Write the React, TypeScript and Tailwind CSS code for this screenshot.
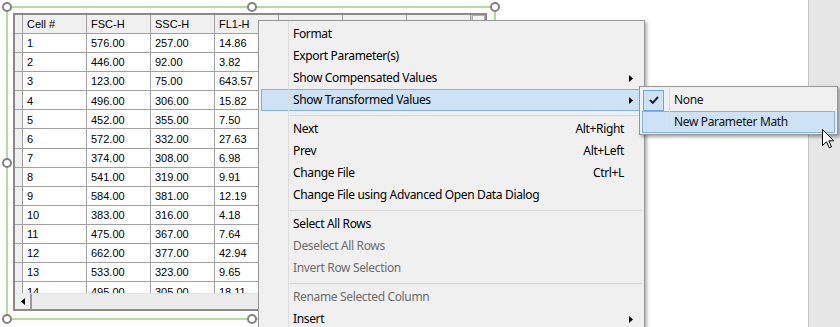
import React from 'react';

type Item =
  | { sep: true }
  | { label: string; shortcut?: string; sub?: boolean; disabled?: boolean; active?: boolean };

const rows: string[][] = [
  ['1', '576.00', '257.00', '14.86'],
  ['2', '446.00', '92.00', '3.82'],
  ['3', '123.00', '75.00', '643.57'],
  ['4', '496.00', '306.00', '15.82'],
  ['5', '452.00', '355.00', '7.50'],
  ['6', '572.00', '332.00', '27.63'],
  ['7', '374.00', '308.00', '6.98'],
  ['8', '541.00', '319.00', '9.91'],
  ['9', '584.00', '381.00', '12.19'],
  ['10', '383.00', '316.00', '4.18'],
  ['11', '475.00', '367.00', '7.64'],
  ['12', '662.00', '377.00', '42.94'],
  ['13', '533.00', '323.00', '9.65'],
  ['14', '495.00', '305.00', '18.11'],
];

const headers = ['Cell #', 'FSC-H', 'SSC-H', 'FL1-H', 'FL2-H', 'FL3-H', 'FL4-H'];

const menu: Item[] = [
  { label: 'Format' },
  { label: 'Export Parameter(s)' },
  { label: 'Show Compensated Values', sub: true },
  { label: 'Show Transformed Values', sub: true, active: true },
  { sep: true },
  { label: 'Next', shortcut: 'Alt+Right' },
  { label: 'Prev', shortcut: 'Alt+Left' },
  { label: 'Change File', shortcut: 'Ctrl+L' },
  { label: 'Change File using Advanced Open Data Dialog' },
  { sep: true },
  { label: 'Select All Rows' },
  { label: 'Deselect All Rows', disabled: true },
  { label: 'Invert Row Selection', disabled: true },
  { sep: true },
  { label: 'Rename Selected Column', disabled: true },
  { label: 'Insert', sub: true },
];

const tableFont = { fontFamily: '"Liberation Sans", Arial, sans-serif' };
const menuFont = { fontFamily: '"Noto Sans", "Open Sans", sans-serif' };

function Handle({ x, y }: { x: number; y: number }) {
  return (
    <div
      className="absolute w-[10px] h-[10px] rounded-full border-2 border-[#828282] bg-white"
      style={{ left: x - 5, top: y - 5 }}
    />
  );
}

function Arrow() {
  return (
    <svg width="4" height="7" viewBox="0 0 4 7" className="block">
      <polygon points="0,0 4,3.5 0,7" fill="#000" />
    </svg>
  );
}

function DataTable() {
  return (
    <div className="w-[474px] h-[298px] border-2 border-[#8a8a8a] flex bg-white text-[11px] text-black" style={tableFont}>
      <div className="w-[456px] flex flex-col">
        <div className="flex-1 overflow-hidden">
          <div className="flex h-[19px] border-b border-[#a0a0a0] bg-[#f0f0f0]">
            <div className="w-[8px] shrink-0 border-r border-[#a0a0a0]" />
            {headers.map((h) => (
              <div key={h} className="w-[64px] shrink-0 border-r border-[#a0a0a0] pl-[4px] pt-[1px] flex items-center">
                {h}
              </div>
            ))}
          </div>
          {rows.map((r) => (
            <div key={r[0]} className="flex h-[19.1px] border-b border-[#a0a0a0]">
              <div className="w-[8px] shrink-0 border-r border-[#a0a0a0] bg-[#f0f0f0]" />
              {[...r, '', '', ''].map((c, i) => (
                <div key={i} className="w-[64px] shrink-0 border-r border-[#a0a0a0] pl-[4px] pt-[1px] flex items-center">
                  {c}
                </div>
              ))}
            </div>
          ))}
        </div>
        <div className="h-[16px] flex bg-[#ececec] border-t border-[#e2e2e2]">
          <div className="w-[17px] flex items-center justify-center border-r-2 border-[#9a9a9a] bg-[#f0f0f0]">
            <svg width="4" height="7" viewBox="0 0 4 7">
              <polygon points="4,0 0,3.5 4,7" fill="#000" />
            </svg>
          </div>
          <div className="flex-1" />
        </div>
      </div>
      <div className="flex-1 bg-[#ececec] border-l border-[#cfcfcf] flex flex-col">
        <div className="h-[17px] border border-[#b0b0b0] bg-[#f4f4f4]" />
      </div>
    </div>
  );
}

function MenuRow({ item }: { item: Exclude<Item, { sep: true }> }) {
  return (
    <div
      className={`h-[22px] mx-[2px] flex items-center border pl-[31px] pr-[8px] ${
        item.active ? 'bg-[#cde2f5] border-[#80b3e4]' : 'border-transparent'
      } ${item.disabled ? 'text-[#6d6d6d]' : 'text-black'}`}
    >
      <span className="flex-1 whitespace-nowrap">{item.label}</span>
      {item.shortcut && <span className="mr-[5px] whitespace-nowrap">{item.shortcut}</span>}
      <span className="w-[4px] flex items-center">{item.sub && <Arrow />}</span>
    </div>
  );
}

export default function App() {
  return (
    <div className="w-[840px] h-[327px] relative overflow-hidden bg-white flex">
      <div className="flex-1 relative">
        <div className="absolute left-[6px] top-[6px] w-[490px] h-[314px] border-2 border-[#b6d9a3] p-[5px]">
          <DataTable />
        </div>
        <Handle x={7} y={7} />
        <Handle x={252} y={7} />
        <Handle x={495} y={7} />
        <Handle x={7} y={163} />
        <Handle x={7} y={319} />
        <Handle x={252} y={319} />
      </div>
      <div className="w-[32px] bg-[#e6e6e6] border-l border-[#c6c6c6]" />

      {/* context menu */}
      <div
        className="absolute left-[258px] top-[20px] w-[387px] h-[330px] bg-[#f0f0f0] border border-[#979797] pt-[2px] shadow-[2px_2px_3px_rgba(0,0,0,0.3)] text-[12px] tracking-[-0.35px]"
        style={menuFont}
      >
        {menu.map((item, i) =>
          'sep' in item ? (
            <div key={i} className="h-[7px] pt-[4px] pl-[31px] pr-[2px]">
              <div className="h-px bg-[#d7d7d7]" />
            </div>
          ) : (
            <MenuRow key={i} item={item} />
          )
        )}
        <div className="absolute left-[29px] top-0 bottom-0 w-px bg-[#dcdcdc]" />
      </div>

      {/* submenu */}
      <div
        className="absolute left-[639px] top-[86px] w-[199px] h-[49px] bg-[#f0f0f0] border border-[#979797] pt-[2px] shadow-[2px_2px_3px_rgba(0,0,0,0.35)] text-[12px] tracking-[-0.35px] text-[#111]"
        style={menuFont}
      >
        <div className="h-[22px] mx-[2px] flex items-center">
          <div className="w-[21px] h-[21px] ml-[1px] border border-[#6ea6dd] bg-[#cce3f6] flex items-center justify-center">
            <svg width="10" height="8" viewBox="0 0 10 8">
              <path d="M1 4 L3.8 6.8 L9 1" fill="none" stroke="#222" strokeWidth="2" />
            </svg>
          </div>
          <span className="ml-[10px]">None</span>
        </div>
        <div className="h-[22px] mx-[2px] flex items-center border bg-[#cde2f5] border-[#80b3e4] pl-[31px]">
          New Parameter Math
        </div>
        <div className="absolute left-[29px] top-[1px] bottom-[2px] w-px bg-[#dcdcdc]" />
      </div>

      {/* cursor */}
      <svg className="absolute left-[822px] top-[129px]" width="13" height="20" viewBox="0 0 13 20">
        <path
          d="M0.5 0.5 L0.5 16.5 L4.5 12.8 L7.3 18.8 L9.5 17.8 L6.8 11.8 L11.8 11.8 Z"
          fill="#fff"
          stroke="#000"
          strokeWidth="1"
          strokeLinejoin="round"
        />
      </svg>
    </div>
  );
}
